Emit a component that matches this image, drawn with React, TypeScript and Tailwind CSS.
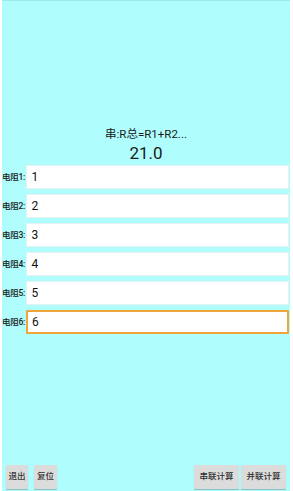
import React from "react";

const values = ["1", "2", "3", "4", "5", "6"];

export default function App() {
  return (
    <div
      className="w-[293px] h-[491px] bg-[#affefd] border-l-2 border-r-[3px] border-white flex flex-col overflow-hidden relative"
      style={{ fontFamily: "Roboto, 'Noto Sans CJK SC', sans-serif" }}
    >
      <div className="absolute top-0 left-0 right-0 h-[1px] bg-[#9ee8e8]" />
      <div className="h-[127px]" />
      <div className="text-center text-[11.5px] leading-[14px] text-[#1a1a1a]">串:R总=R1+R2...</div>
      <div className="text-center text-[17px] leading-[22px] text-[#1a1a1a] mt-[1px]">21.0</div>
      <div className="flex flex-col gap-[5px] mt-[1px]">
        {values.map((v, i) => (
          <div key={i} className="flex items-center h-[24px]">
            <div className="w-[24px] text-[8.5px] font-medium text-[#1a1a1a] whitespace-nowrap tracking-[-0.3px]">
              电阻{i + 1}:
            </div>
            <div
              className={
                i === 5
                  ? "flex-1 h-[24px] mr-[1px] bg-white border-2 border-[#f0a43a] rounded-[1px] flex items-center pl-[4px] text-[12px] text-[#111]"
                  : "flex-1 h-[24px] mr-[1px] bg-white border border-[#e3f3f3] shadow-[0_0_1px_#c9eaea] flex items-center pl-[4.5px] text-[12px] text-[#111]"
              }
            >
              {v}
            </div>
          </div>
        ))}
      </div>
      <div className="flex-1" />
      <div className="flex items-center px-[4px] pb-[2px] h-[27px]">
        <button className="h-[24px] w-[22px] bg-[#dcdcdc] shadow-[0_1px_1px_rgba(0,0,0,0.25)] rounded-[1px] text-[8.5px] font-medium text-[#333]">
          退出
        </button>
        <button className="h-[24px] w-[23px] ml-[6px] bg-[#dcdcdc] shadow-[0_1px_1px_rgba(0,0,0,0.25)] rounded-[1px] text-[8.5px] font-medium text-[#333]">
          复位
        </button>
        <div className="flex-1" />
        <button className="h-[24px] w-[45px] bg-[#dcdcdc] shadow-[0_1px_1px_rgba(0,0,0,0.25)] rounded-[1px] text-[8.5px] font-medium text-[#333]">
          串联计算
        </button>
        <button className="h-[24px] w-[45px] ml-[2px] bg-[#dcdcdc] shadow-[0_1px_1px_rgba(0,0,0,0.25)] rounded-[1px] text-[8.5px] font-medium text-[#333]">
          并联计算
        </button>
      </div>
    </div>
  );
}
